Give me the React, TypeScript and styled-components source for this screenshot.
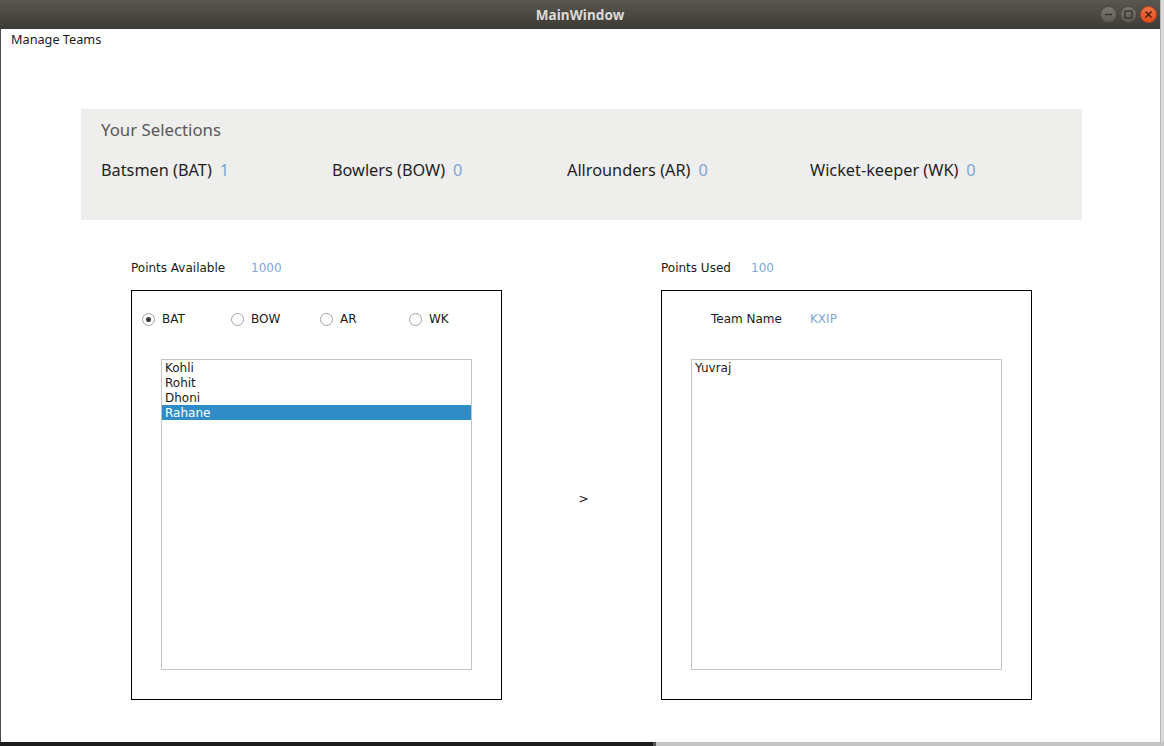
import React, { useState } from "react";
import styled, { createGlobalStyle } from "styled-components";

const GlobalStyle = createGlobalStyle`
  html, body {
    margin: 0;
    padding: 0;
    background: #1c1c1c;
    overflow: hidden;
  }
  * {
    box-sizing: border-box;
  }
`;

const Screen = styled.div`
  display: grid;
  grid-template-columns: 1160px 4px;
  grid-template-rows: 742px 4px;
  width: 1164px;
  height: 746px;
`;

const SideStrip = styled.div`
  background: #dadada;
  border-left: 1px solid #b8b8b8;
`;

const BottomStrip = styled.div`
  grid-column: 1 / span 2;
  display: grid;
  grid-template-columns: 653px 3px 1fr;
`;

const StripPart = styled.div<{ $color: string }>`
  background: ${(p) => p.$color};
`;

const Window = styled.div`
  display: flex;
  flex-direction: column;
  background: #ffffff;
  border-left: 1px solid #4a4a4a;
`;

const TitleBar = styled.div`
  display: grid;
  grid-template-columns: 1fr auto 1fr;
  align-items: center;
  height: 29px;
  background: linear-gradient(#5a5751, #3d3b36);
  margin-left: -1px;
`;

const Title = styled.div`
  grid-column: 2;
  font-family: "Noto Sans", "DejaVu Sans", sans-serif;
  font-weight: 700;
  font-size: 13.5px;
  color: #dfdbd2;
  letter-spacing: 0.1px;
`;

const WindowButtons = styled.div`
  justify-self: end;
  display: flex;
  gap: 3px;
  padding-right: 3px;
`;

const WinButton = styled.div<{ $close?: boolean }>`
  width: 17px;
  height: 17px;
  border-radius: 50%;
  display: grid;
  place-items: center;
  background: ${(p) =>
    p.$close
      ? "linear-gradient(#f0744a, #df4a16)"
      : "linear-gradient(#7a7770, #5d5a54)"};
  border: 1px solid ${(p) => (p.$close ? "#b8461c" : "#4a4843")};
`;

const MenuBar = styled.div`
  height: 19px;
  display: flex;
  align-items: center;
  padding-left: 10px;
  font-family: "Noto Sans", "DejaVu Sans", sans-serif;
  font-size: 12.7px;
  color: #1a1a1a;
`;

const Content = styled.div`
  flex: 1;
  padding-top: 61px;
  padding-left: 80px;
`;

const SelectionPanel = styled.div`
  width: 1001px;
  height: 111px;
  background: #eeeeec;
  padding: 10px 20px 0 20px;
  font-family: "Noto Sans", "DejaVu Sans", sans-serif;
`;

const PanelTitle = styled.div`
  font-size: 16.8px;
  line-height: 22px;
  color: #5a5856;
`;

const CountRow = styled.div`
  display: grid;
  grid-template-columns: 231px 235px 243px 1fr;
  margin-top: 18px;
  font-size: 16.3px;
  line-height: 22px;
`;

const CountItem = styled.div`
  display: flex;
  gap: 8px;
  color: #1f1f1f;
`;

const BlueValue = styled.span`
  color: #7fa6d6;
`;

const LowerRow = styled.div`
  display: flex;
  margin-top: 40px;
  padding-left: 50px;
  font-family: "DejaVu Sans", sans-serif;
  font-size: 12px;
  color: #1a1a1a;
`;

const Column = styled.div`
  display: flex;
  flex-direction: column;
  width: 371px;
`;

const PointsLine = styled.div`
  display: flex;
  height: 16px;
  line-height: 16px;
  margin-bottom: 14px;
`;

const FieldLabel = styled.span<{ $width: number }>`
  width: ${(p) => p.$width}px;
`;

const Box = styled.div`
  height: 410px;
  border: 1px solid #000;
  display: flex;
  flex-direction: column;
`;

const RadioRow = styled.div`
  display: grid;
  grid-template-columns: repeat(4, 89px);
  padding-left: 10px;
  margin-top: 20px;
  height: 16px;
  align-items: center;
`;

const RadioOption = styled.label`
  display: flex;
  align-items: center;
  gap: 7px;
  cursor: pointer;
`;

const RadioCircle = styled.span<{ $checked: boolean }>`
  width: 13px;
  height: 13px;
  border-radius: 50%;
  border: 1px solid #a3a3a3;
  background: #fff;
  display: grid;
  place-items: center;
  &::after {
    content: "";
    width: 5px;
    height: 5px;
    border-radius: 50%;
    background: ${(p) => (p.$checked ? "#3a3a3a" : "transparent")};
  }
`;

const TeamLine = styled.div`
  display: flex;
  padding-left: 49px;
  margin-top: 20px;
  height: 16px;
  line-height: 16px;
`;

const List = styled.div`
  width: 311px;
  height: 311px;
  margin-left: 29px;
  margin-top: 32px;
  border: 1px solid #c4c4c4;
  background: #fff;
`;

const ListItem = styled.div<{ $selected?: boolean }>`
  height: 15px;
  line-height: 14px;
  padding: 1px 0 0 3px;
  background: ${(p) => (p.$selected ? "#308cc6" : "transparent")};
  color: ${(p) => (p.$selected ? "#ffffff" : "#1a1a1a")};
  cursor: default;
`;

const Middle = styled.div`
  width: 159px;
  display: flex;
  align-items: center;
  justify-content: center;
  padding-top: 37px;
  padding-left: 4px;
`;

const roles = ["BAT", "BOW", "AR", "WK"];

const players: Record<string, string[]> = {
  BAT: ["Kohli", "Rohit", "Dhoni", "Rahane"],
  BOW: [],
  AR: [],
  WK: [],
};

export default function App() {
  const [role, setRole] = useState("BAT");
  const [selected, setSelected] = useState("Rahane");

  return (
    <>
      <GlobalStyle />
      <Screen>
        <Window>
          <TitleBar>
            <Title>MainWindow</Title>
            <WindowButtons>
              <WinButton>
                <svg width="9" height="9" viewBox="0 0 9 9">
                  <line x1="1" y1="4.5" x2="8" y2="4.5" stroke="#2e2d2a" strokeWidth="1.2" />
                </svg>
              </WinButton>
              <WinButton>
                <svg width="9" height="9" viewBox="0 0 9 9">
                  <rect x="1" y="1" width="7" height="7" fill="none" stroke="#2e2d2a" strokeWidth="1.2" />
                </svg>
              </WinButton>
              <WinButton $close>
                <svg width="9" height="9" viewBox="0 0 9 9">
                  <path d="M1.5 1.5 L7.5 7.5 M7.5 1.5 L1.5 7.5" stroke="#3a1a0c" strokeWidth="1.3" />
                </svg>
              </WinButton>
            </WindowButtons>
          </TitleBar>
          <MenuBar>Manage Teams</MenuBar>
          <Content>
            <SelectionPanel>
              <PanelTitle>Your Selections</PanelTitle>
              <CountRow>
                <CountItem>Batsmen (BAT)<BlueValue>1</BlueValue></CountItem>
                <CountItem>Bowlers (BOW)<BlueValue>0</BlueValue></CountItem>
                <CountItem>Allrounders (AR)<BlueValue>0</BlueValue></CountItem>
                <CountItem>Wicket-keeper (WK)<BlueValue>0</BlueValue></CountItem>
              </CountRow>
            </SelectionPanel>
            <LowerRow>
              <Column>
                <PointsLine>
                  <FieldLabel $width={120}>Points Available</FieldLabel>
                  <BlueValue>1000</BlueValue>
                </PointsLine>
                <Box>
                  <RadioRow>
                    {roles.map((r) => (
                      <RadioOption key={r} onClick={() => setRole(r)}>
                        <RadioCircle $checked={role === r} />
                        {r}
                      </RadioOption>
                    ))}
                  </RadioRow>
                  <List>
                    {players[role].map((p) => (
                      <ListItem key={p} $selected={selected === p} onClick={() => setSelected(p)}>
                        {p}
                      </ListItem>
                    ))}
                  </List>
                </Box>
              </Column>
              <Middle>&gt;</Middle>
              <Column>
                <PointsLine>
                  <FieldLabel $width={90}>Points Used</FieldLabel>
                  <BlueValue>100</BlueValue>
                </PointsLine>
                <Box>
                  <TeamLine>
                    <FieldLabel $width={99}>Team Name</FieldLabel>
                    <BlueValue>KXIP</BlueValue>
                  </TeamLine>
                  <List>
                    <ListItem>Yuvraj</ListItem>
                  </List>
                </Box>
              </Column>
            </LowerRow>
          </Content>
        </Window>
        <SideStrip />
        <BottomStrip>
          <StripPart $color="#1c1c1c" />
          <StripPart $color="#555555" />
          <StripPart $color="#c4c4c4" />
        </BottomStrip>
      </Screen>
    </>
  );
}
